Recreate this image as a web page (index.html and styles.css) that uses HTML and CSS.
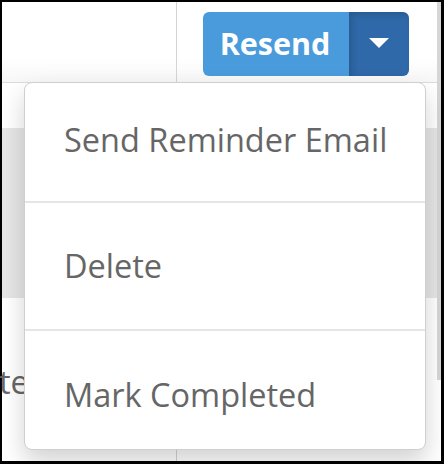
FILE: index.html
```html
<!DOCTYPE html>
<html>
<head>
<meta charset="utf-8">
<link rel="stylesheet" href="styles.css">
</head>
<body>
<div class="frame">
  <div class="main">
    <div class="row head">
      <div class="cell first"></div>
      <div class="cell actions">
        <div class="btn-group">
          <button class="btn btn-main">Resend</button>
          <button class="btn btn-caret"><span class="caret"></span></button>
        </div>
      </div>
    </div>
    <div class="row plain"></div>
    <div class="row shaded"></div>
    <div class="row lower">
      <div class="clip">te</div>
    </div>
    <div class="row foot">
      <div class="cell first"></div>
    </div>
    <ul class="menu">
      <li class="item i1">Send Reminder Email</li>
      <li class="item i2">Delete</li>
      <li class="item i3">Mark Completed</li>
    </ul>
  </div>
  <div class="scroll"><div class="thumb"></div></div>
</div>
</body>
</html>
```
FILE: styles.css
```css
html, body {
  margin: 0;
  padding: 0;
  background: #000;
}
body {
  width: 444px;
  height: 464px;
  overflow: hidden;
  font-family: "Open Sans", "Liberation Sans", sans-serif;
}
.frame {
  margin: 2px 3px 3px 2px;
  width: 439px;
  height: 459px;
  background: #fff;
  display: flex;
}
.main {
  position: relative;
  width: 435px;
  height: 459px;
  display: flex;
  flex-direction: column;
}
.scroll {
  width: 4px;
  background: #fff;
}
.thumb {
  height: 378px;
  background: #d6d6d6;
}
.row {
  display: flex;
  flex: none;
}
.head {
  height: 80px;
  background: linear-gradient(#fff 70%, #f7f7f7);
  border-bottom: 1px solid #dcdcdc;
}
.cell.first {
  width: 174px;
  border-right: 1px solid #d4d4d4;
}
.actions {
  flex: 1;
  display: flex;
  justify-content: flex-end;
  align-items: flex-start;
  padding: 10px 28px 0 0;
}
.btn-group {
  display: flex;
  height: 64px;
  border-radius: 6px;
  overflow: hidden;
}
.btn {
  border: 0;
  margin: 0;
  font-family: inherit;
  color: #fff;
  height: 64px;
  cursor: pointer;
}
.btn-main {
  width: 146px;
  background: #4a9bdc;
  font-weight: 700;
  font-size: 30.5px;
  padding: 0 2px 2px 0;
  line-height: 1;
}
.btn-caret {
  width: 60px;
  background: #2f69a9;
  box-shadow: inset 3px 3px 6px rgba(0, 0, 0, 0.15);
  display: flex;
  align-items: center;
  justify-content: center;
  padding: 0 0 2px;
}
.caret {
  width: 0;
  height: 0;
  border-left: 10px solid transparent;
  border-right: 10px solid transparent;
  border-top: 10px solid #fff;
}
.plain {
  height: 45px;
  background: #fff;
}
.shaded {
  height: 170px;
  background: #e6e6e6;
}
.lower {
  height: 152px;
  background: #fff;
  align-items: center;
}
.clip {
  color: #666;
  font-size: 32.5px;
  margin-left: -3px;
  padding-top: 14px;
}
.foot {
  flex: 1;
  background: #fff;
}
.menu {
  position: absolute;
  left: 22px;
  top: 80px;
  width: 400px;
  margin: 0;
  padding: 0;
  list-style: none;
  background: #fff;
  border: 1px solid #cfcfcf;
  border-radius: 8px;
  box-shadow: 0 12px 24px rgba(0, 0, 0, 0.175);
}
.item {
  color: #666;
  font-size: 32.5px;
  line-height: 44px;
  padding-left: 39px;
}
.i1 {
  padding-top: 35px;
  padding-bottom: 39px;
  border-bottom: 2px solid #e5e5e5;
}
.i2 {
  padding-top: 41px;
  padding-bottom: 41px;
  border-bottom: 2px solid #e5e5e5;
}
.i3 {
  padding-top: 42px;
  padding-bottom: 32px;
}
```
